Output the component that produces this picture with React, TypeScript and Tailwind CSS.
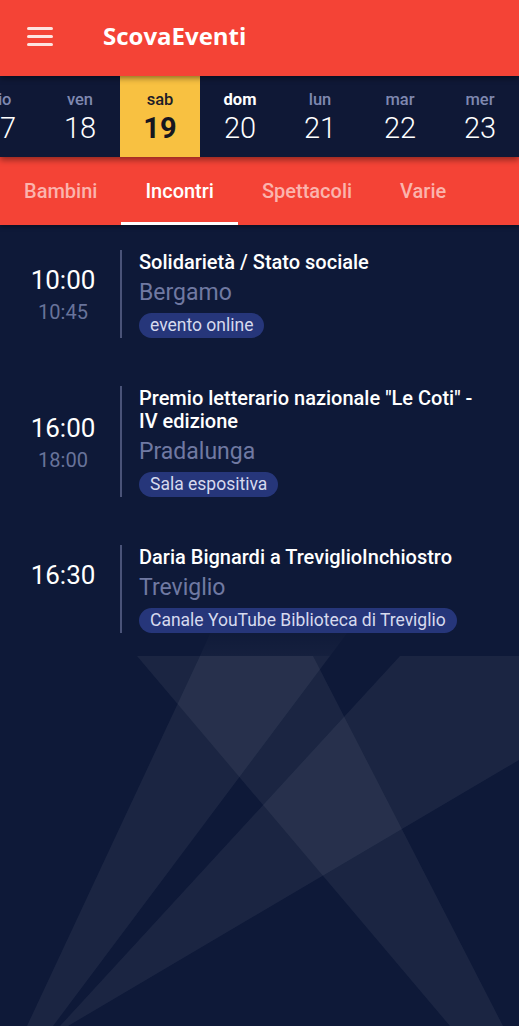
import React from "react";

const days = [
  { d: "gio", n: "17" },
  { d: "ven", n: "18" },
  { d: "sab", n: "19", sel: true },
  { d: "dom", n: "20", today: true },
  { d: "lun", n: "21" },
  { d: "mar", n: "22" },
  { d: "mer", n: "23" },
];

const tabs = [
  { t: "Bambini" },
  { t: "Incontri", active: true },
  { t: "Spettacoli" },
  { t: "Varie" },
];

const events = [
  {
    start: "10:00",
    end: "10:45",
    title: "Solidarietà / Stato sociale",
    place: "Bergamo",
    tag: "evento online",
  },
  {
    start: "16:00",
    end: "18:00",
    title: 'Premio letterario nazionale "Le Coti" - IV edizione',
    place: "Pradalunga",
    tag: "Sala espositiva",
  },
  {
    start: "16:30",
    end: "",
    title: "Daria Bignardi a TreviglioInchiostro",
    place: "Treviglio",
    tag: "Canale YouTube Biblioteca di Treviglio",
  },
];

export default function App() {
  return (
    <div
      className="w-[519px] h-[1026px] overflow-hidden bg-[#0e1938] flex flex-col"
      style={{ fontFamily: "Roboto, 'Noto Sans', sans-serif" }}
    >
      {/* App bar */}
      <div className="relative z-30 h-[76px] shrink-0 bg-[#f44336] flex items-center shadow-[0_2px_6px_rgba(0,0,0,0.45)]">
        <div className="ml-[27px] w-[26px] flex flex-col gap-[5px] mt-[-4px]">
          <div className="h-[3px] rounded-full bg-[#fde3e0]" />
          <div className="h-[3px] rounded-full bg-[#fde3e0]" />
          <div className="h-[3px] rounded-full bg-[#fde3e0]" />
        </div>
        <div
          className="ml-[50px] text-white text-[24px] font-bold mt-[-4px]"
          style={{ fontFamily: "'Open Sans', 'Liberation Sans', sans-serif" }}
        >
          ScovaEventi
        </div>
      </div>

      {/* Date strip */}
      <div className="relative z-20 h-[81px] shrink-0 bg-[#0f1836] overflow-hidden shadow-[0_3px_6px_rgba(0,0,0,0.4)]">
        <div className="flex ml-[-40px] h-full">
          {days.map((x) => (
            <div
              key={x.n}
              className={
                "w-[80px] shrink-0 h-full flex flex-col items-center " +
                (x.sel ? "bg-[#f8c141]" : "")
              }
            >
              <div
                className={
                  "mt-[13px] text-[16.5px] leading-[22px] " +
                  (x.sel
                    ? "text-[#1c1c28] font-medium"
                    : x.today
                    ? "text-white font-bold"
                    : "text-[#7f88b0] font-medium")
                }
              >
                {x.d}
              </div>
              <div
                className={
                  "text-[29px] leading-[34px] " +
                  (x.sel ? "text-[#16161f] font-bold" : "text-white font-light")
                }
              >
                {x.n}
              </div>
            </div>
          ))}
        </div>
      </div>

      {/* Tabs */}
      <div className="relative z-10 h-[68px] shrink-0 bg-[#f44336] flex shadow-[0_2px_4px_rgba(0,0,0,0.35)]">
        {tabs.map((t) => (
          <div
            key={t.t}
            className="relative px-[24px] h-full flex items-center"
          >
            <span
              className={
                "text-[20px] font-medium " +
                (t.active ? "text-white" : "text-[#fbb4ad]")
              }
            >
              {t.t}
            </span>
            {t.active && (
              <div className="absolute left-0 right-0 bottom-0 h-[3px] bg-white" />
            )}
          </div>
        ))}
      </div>

      {/* Main */}
      <div className="relative flex-1 overflow-hidden">
        <svg
          className="absolute left-0 top-0"
          width="519"
          height="801"
          viewBox="0 0 519 801"
        >
          <defs>
            <linearGradient id="fadeup" x1="0" y1="400" x2="0" y2="431" gradientUnits="userSpaceOnUse">
              <stop offset="0" stopColor="#ffffff" stopOpacity="0" />
              <stop offset="1" stopColor="#ffffff" stopOpacity="0.03" />
            </linearGradient>
          </defs>
          <g fill="#ffffff" fillOpacity="0.055">
            <polygon points="27,801 53,801 330,431 200,431" />
            <polygon points="60,801 68,801 519,535 519,431 400,431" />
            <polygon points="450,801 503,801 313,431 137,431" />
          </g>
          <polygon points="200,431 330,431 353,400 214,400" fill="url(#fadeup)" />
        </svg>

        <div className="relative flex flex-col gap-[48px] pt-[25px]">
          {events.map((e) => (
            <div key={e.title} className="flex items-stretch">
              <div className="w-[120px] shrink-0 pl-[6px] flex flex-col items-center justify-center pt-[4px]">
                <div className="text-[26px] leading-[32px] text-white">
                  {e.start}
                </div>
                <div className="text-[20px] leading-[32px] text-[#68739a] min-h-[32px]">
                  {e.end}
                </div>
              </div>
              <div className="w-[2px] bg-[#4a5378] shrink-0" />
              <div className="pl-[17px] pr-[24px] flex flex-col items-start">
                <div className="text-[20px] leading-[23px] font-medium text-white pt-[1px]">
                  {e.title}
                </div>
                <div className="text-[23px] leading-[40px] text-[#7079a2] mt-[-1px]">
                  {e.place}
                </div>
                <div className="h-[25px] px-[11px] rounded-full bg-[#26367a] text-[#d6daee] text-[17.5px] leading-[25px]">
                  {e.tag}
                </div>
              </div>
            </div>
          ))}
        </div>
      </div>
    </div>
  );
}
